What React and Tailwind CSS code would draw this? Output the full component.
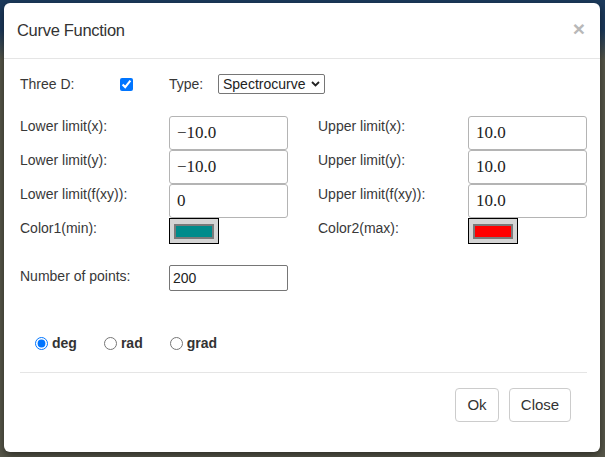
import { useState } from "react";

const FONT = { fontFamily: '"Liberation Sans", Arial, sans-serif' };

function LimitInput({ value }) {
  return (
    <div className="flex h-[34px] w-[119px] items-center rounded-[3px] border border-[#b4b4b4] bg-white pl-[7px] pb-[1px] font-['Liberation_Serif',serif] text-[17px] text-[#222]">
      {value}
    </div>
  );
}

function ColorButton({ color }) {
  return (
    <div className="flex h-[26px] w-[50px] items-center justify-center border border-black bg-[#d4d4d4]">
      <div className="h-[15px] w-[40px] border-2 border-[#7a7a7a]" style={{ backgroundColor: color }} />
    </div>
  );
}

function Radio({ label, checked }) {
  return (
    <label className="flex items-center gap-[4px] text-[14px] font-bold text-[#333]">
      <input type="radio" name="angle" defaultChecked={checked} className="m-0 h-[13px] w-[13px]" />
      {label}
    </label>
  );
}

export default function App() {
  const [threeD, setThreeD] = useState(true);

  const rows = [
    ["Lower limit(x):", "\u221210.0", "Upper limit(x):", "10.0"],
    ["Lower limit(y):", "\u221210.0", "Upper limit(y):", "10.0"],
    ["Lower limit(f(xy)):", "0", "Upper limit(f(xy)):", "10.0"],
  ];

  return (
    <div
      className="h-[457px] w-[605px] overflow-hidden bg-[linear-gradient(to_bottom,#1c3a5c_0,#1c3a5c_30px,#58584a_60px,#58584a_100%)] pt-[3px] pl-[4px]"
      style={FONT}
    >
      <div className="flex h-[449px] w-[596px] flex-col rounded-[6px] bg-white shadow-[0_3px_9px_rgba(0,0,0,0.5)]">
        <header className="flex h-[56px] items-center justify-between border-b border-[#e5e5e5] pl-[13px] pr-[15px]">
          <h4 className="pb-[1px] text-[16.5px] tracking-[-0.3px] text-[#333]">Curve Function</h4>
          <span className="pb-[4px] text-[21px] font-bold leading-none text-[#b8b8b8]">×</span>
        </header>

        <div className="flex flex-1 flex-col px-[16px] pt-[15px] text-[14px] text-[#383838]">
          <div className="flex h-[20px] items-center">
            <span className="w-[100px]">Three D:</span>
            <input
              type="checkbox"
              checked={threeD}
              onChange={(e) => setThreeD(e.target.checked)}
              className="m-0 h-[13px] w-[13px]"
            />
            <span className="ml-[36px] w-[49px]">Type:</span>
            <div className="flex h-[20px] w-[107px] items-center justify-between rounded-[2px] border border-[#767676] pl-[4px] pr-[4px] text-[#222]">
              <span>Spectrocurve</span>
              <svg width="9" height="6" viewBox="0 0 9 6">
                <path d="M1 1l3.5 3.5L8 1" fill="none" stroke="#222" strokeWidth="1.8" />
              </svg>
            </div>
          </div>

          <div className="mt-[22px] grid grid-cols-[149px_119px_180px_119px]">
            {rows.map(([l1, v1, l2, v2]) => (
              <div key={l1} className="contents">
                <span className="h-[34px] leading-[20px]">{l1}</span>
                <LimitInput value={v1} />
                <span className="h-[34px] pl-[30px] leading-[20px]">{l2}</span>
                <LimitInput value={v2} />
              </div>
            ))}
            <span className="leading-[20px]">Color1(min):</span>
            <ColorButton color="#008b8b" />
            <span className="pl-[30px] leading-[20px]">Color2(max):</span>
            <ColorButton color="#ff0000" />
          </div>

          <div className="mt-[21px] grid grid-cols-[149px_119px]">
            <span className="pt-[1px] leading-[20px]">Number of points:</span>
            <div className="flex h-[26px] items-center rounded-[2px] border border-[#767676] pl-[3px] text-[#222]">
              200
            </div>
          </div>

          <div className="mt-[42px] flex h-[20px] items-center gap-[27px] pl-[15px]">
            <Radio label="deg" checked />
            <Radio label="rad" />
            <Radio label="grad" />
          </div>

          <div className="mt-[19px] w-[567px] border-t border-[#e5e5e5]" />

          <div className="mt-[15px] flex justify-end gap-[10px] pr-[13px]">
            <button className="h-[34px] w-[44px] rounded-[4px] border border-[#ccc] bg-white text-[15px] text-[#333]">
              Ok
            </button>
            <button className="h-[34px] w-[62px] rounded-[4px] border border-[#ccc] bg-white text-[15px] text-[#333]">
              Close
            </button>
          </div>
        </div>
      </div>
    </div>
  );
}
